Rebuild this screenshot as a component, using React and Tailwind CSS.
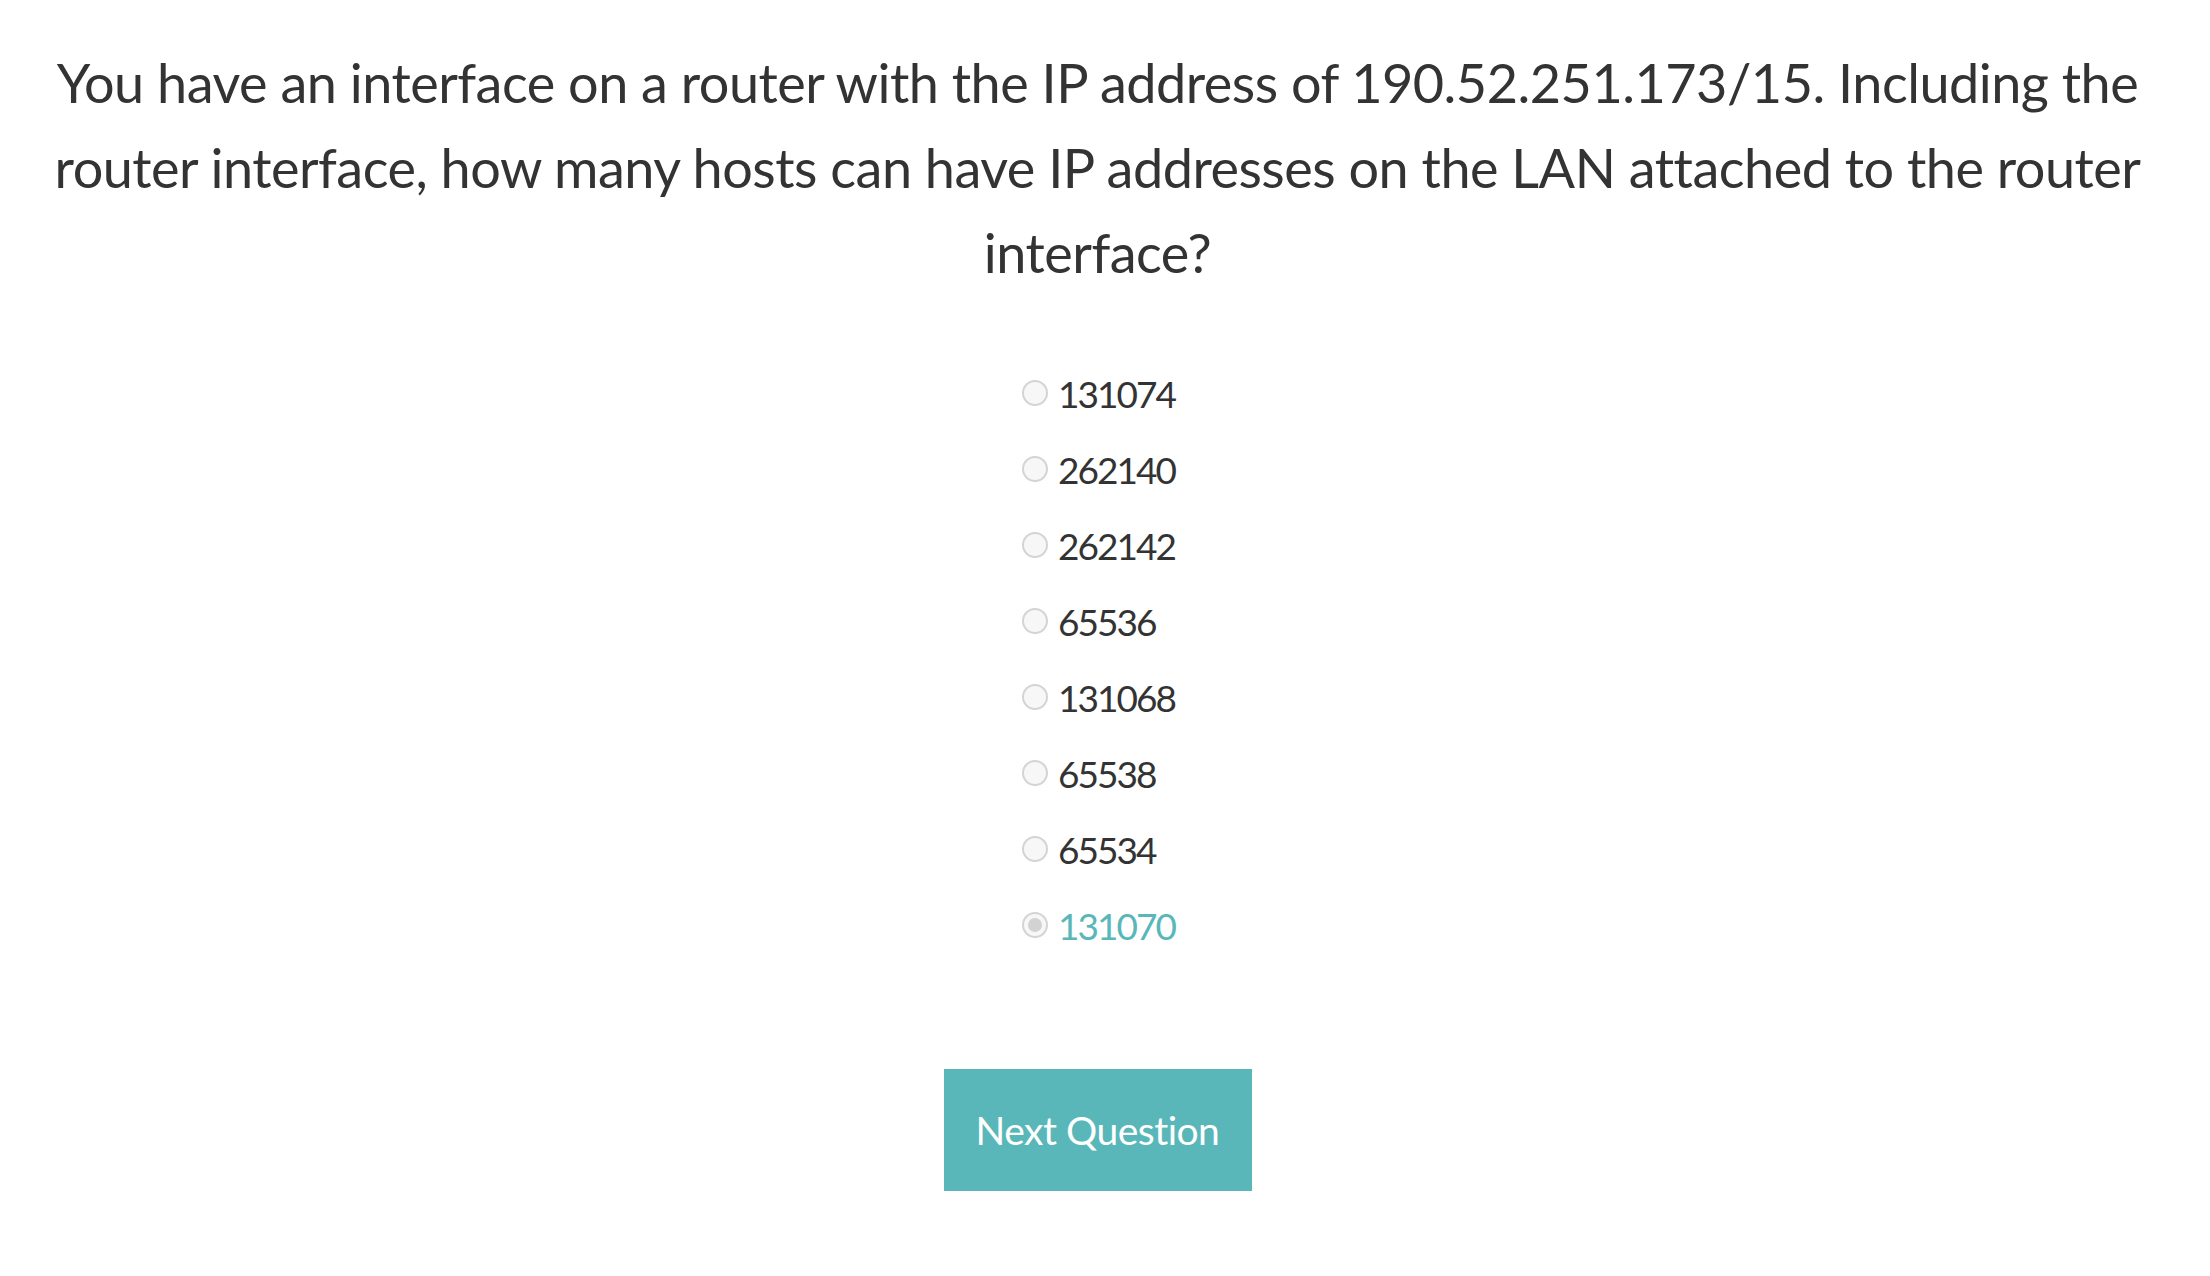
import React from 'react';

const options = ['131074', '262140', '262142', '65536', '131068', '65538', '65534', '131070'];

function Radio({ checked }) {
  return (
    <span className="w-[26px] h-[26px] rounded-full border-2 border-[#d4d4d4] bg-[#f7f7f7] flex items-center justify-center shrink-0">
      {checked && <span className="w-[14px] h-[14px] rounded-full bg-[#d2d2d2]" />}
    </span>
  );
}

export default function App() {
  const selected = '131070';

  return (
    <div className="min-h-screen bg-white text-[#333333] font-['Lato',sans-serif] flex flex-col items-center pt-[40px] pr-[15px]">
      <h1 className="text-center text-[54px] leading-[85px] tracking-[-0.5px] font-normal">
        <span className="whitespace-nowrap">You have an interface on a router with the IP address of 190.52.251.173/15. Including the</span>
        <br />
        <span className="whitespace-nowrap">router interface, how many hosts can have IP addresses on the LAN attached to the router</span>
        <br />
        interface?
      </h1>

      <div className="mt-[78px] flex flex-col gap-[36px] self-center ml-[2px]">
        {options.map((opt) => (
          <label key={opt} className="flex items-center gap-[10px] h-[40px] cursor-pointer">
            <Radio checked={opt === selected} />
            <span className={`text-[37px] leading-none tracking-[-2px] ${opt === selected ? 'text-[#5ab7b9]' : 'text-[#333333]'}`}>
              {opt}
            </span>
          </label>
        ))}
      </div>

      <button className="mt-[124px] w-[308px] h-[122px] bg-[#5ab7b9] text-white text-[39px] tracking-[-0.5px]">
        Next Question
      </button>
    </div>
  );
}
